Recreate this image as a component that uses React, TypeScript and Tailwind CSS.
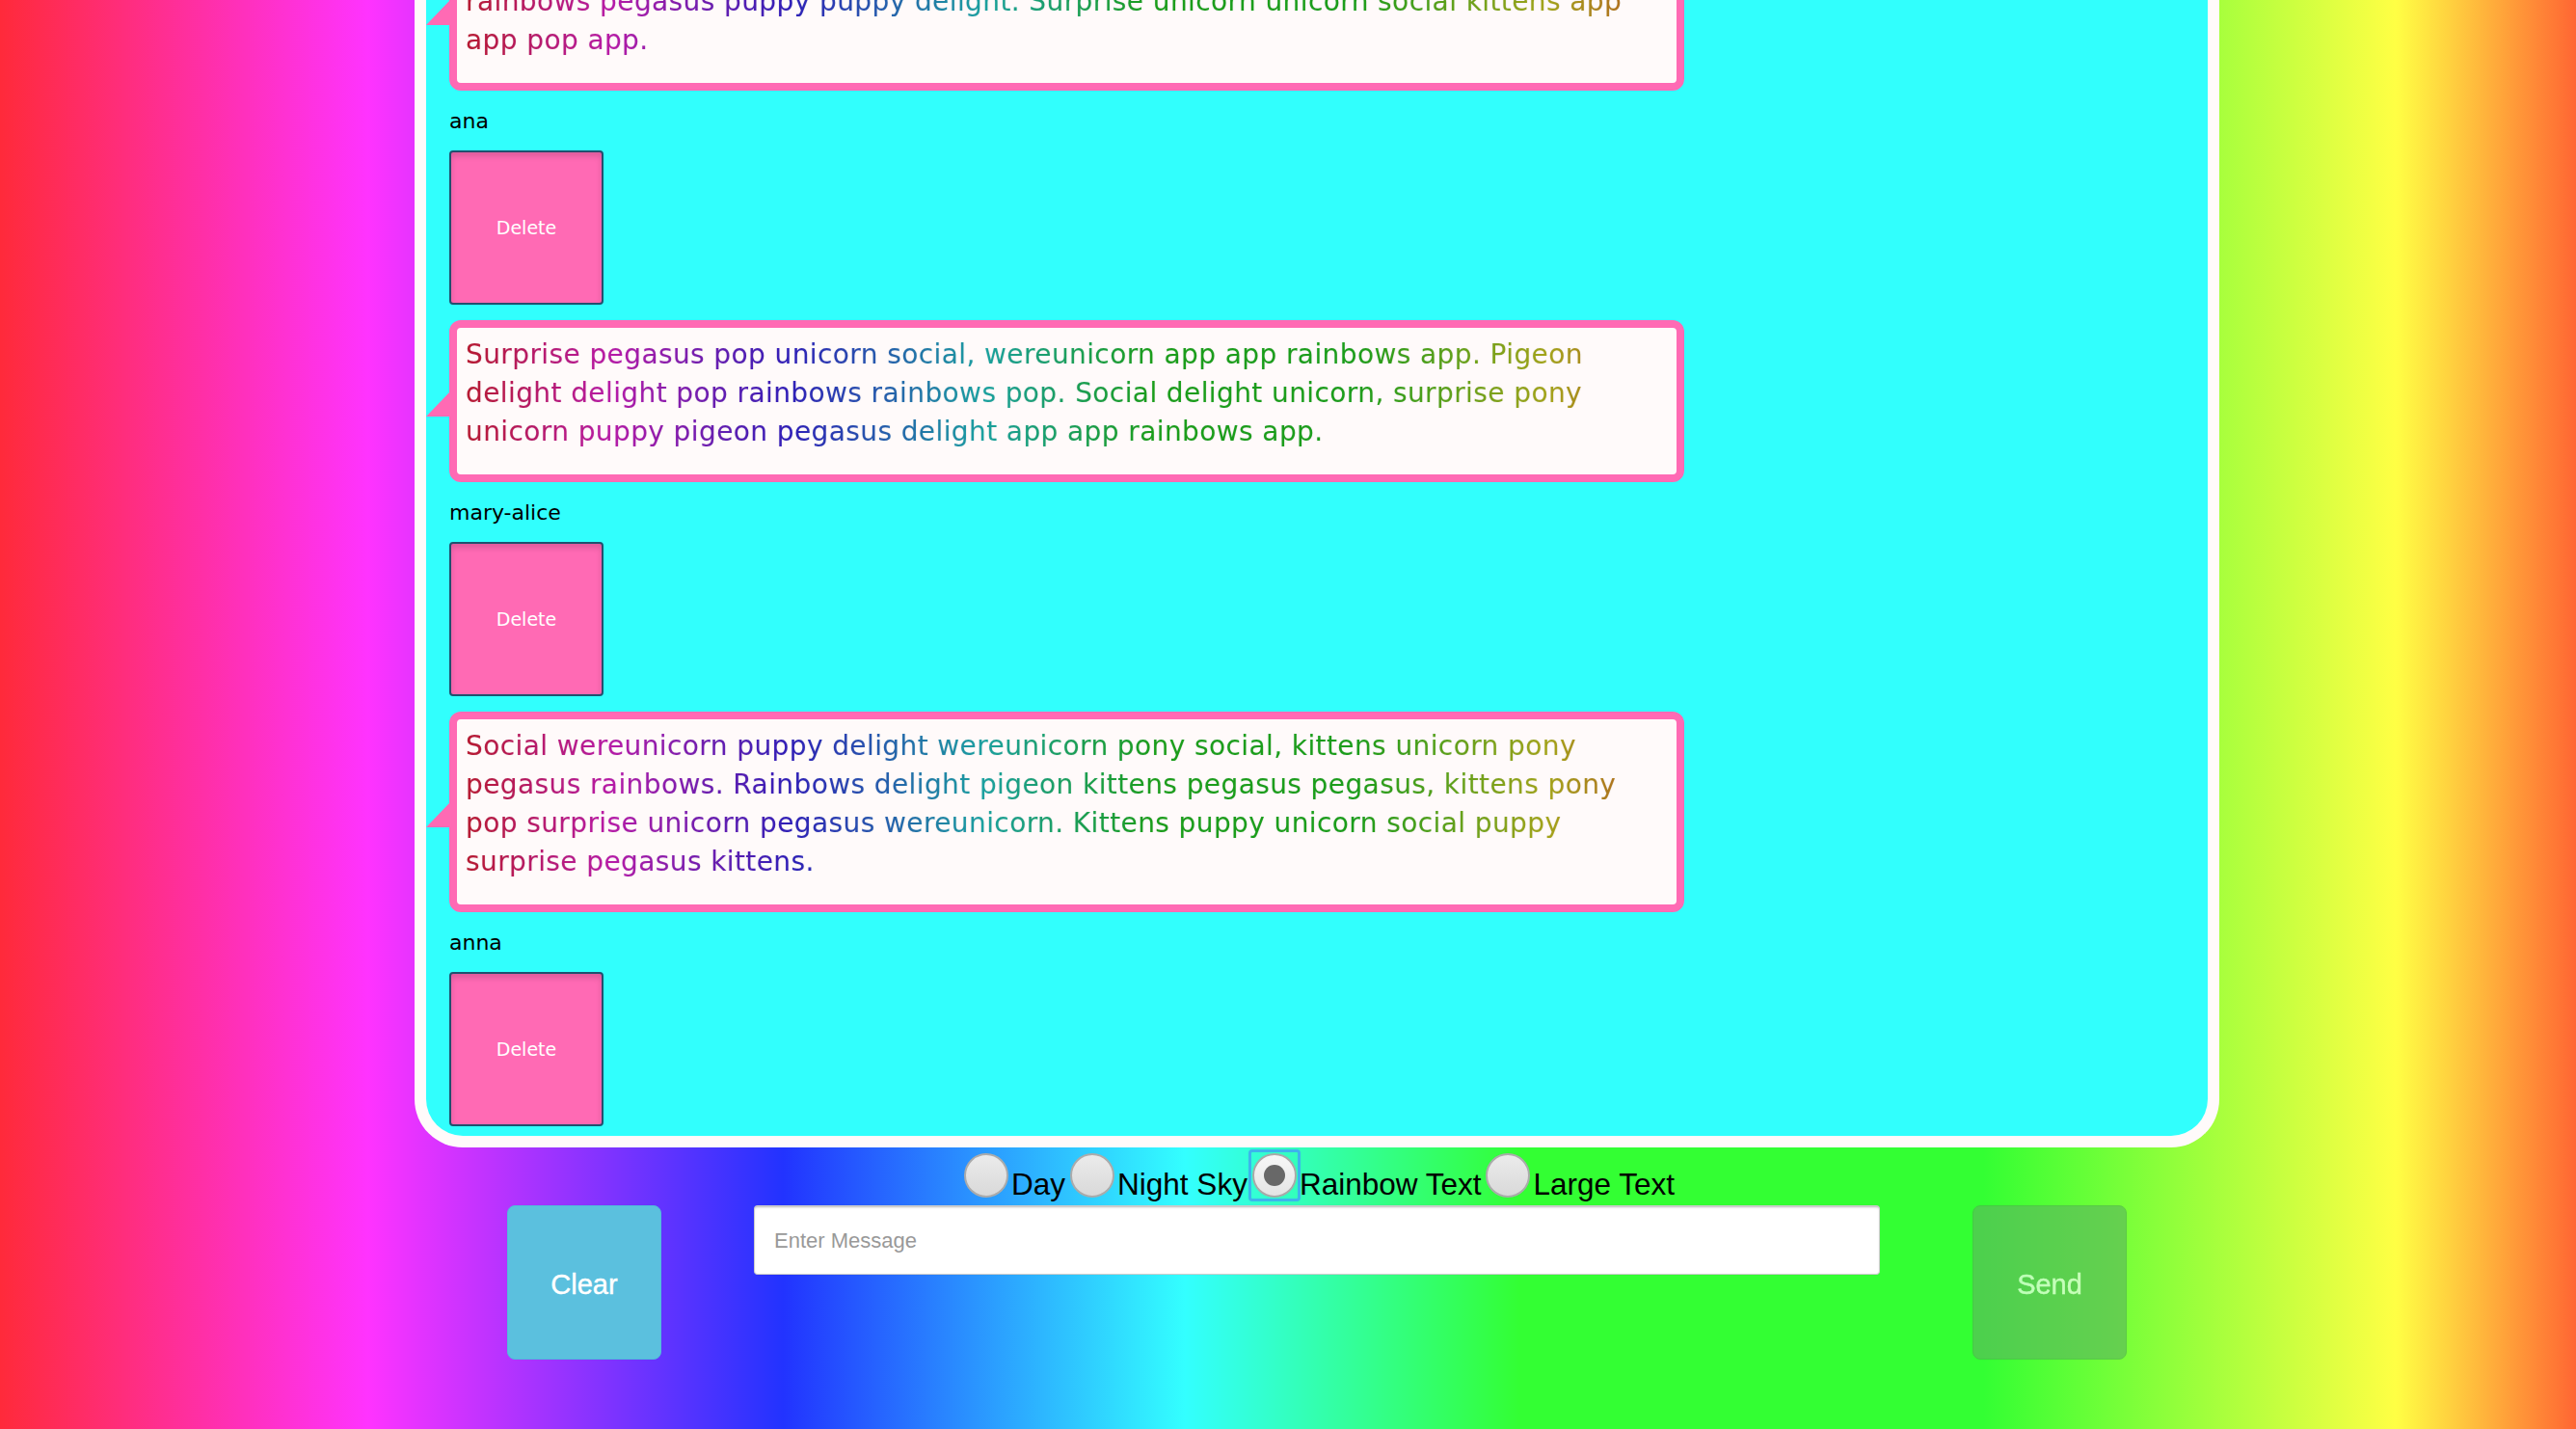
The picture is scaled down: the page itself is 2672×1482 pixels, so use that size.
const messages = [
  {
    user: "ana",
    lines: [
      "Pony delight kittens pigeon pop social unicorn wereunicorn puppy pegasus",
      "rainbows pegasus puppy puppy delight. Surprise unicorn unicorn social kittens app",
      "app pop app.",
    ],
  },
  {
    user: "mary-alice",
    lines: [
      "Surprise pegasus pop unicorn social, wereunicorn app app rainbows app. Pigeon",
      "delight delight pop rainbows rainbows pop. Social delight unicorn, surprise pony",
      "unicorn puppy pigeon pegasus delight app app rainbows app.",
    ],
  },
  {
    user: "anna",
    lines: [
      "Social wereunicorn puppy delight wereunicorn pony social, kittens unicorn pony",
      "pegasus rainbows. Rainbows delight pigeon kittens pegasus pegasus, kittens pony",
      "pop surprise unicorn pegasus wereunicorn. Kittens puppy unicorn social puppy",
      "surprise pegasus kittens.",
    ],
  },
];

const themes = [
  { label: "Day", checked: false },
  { label: "Night Sky", checked: false },
  { label: "Rainbow Text", checked: true },
  { label: "Large Text", checked: false },
];

function Bubble({ lines }: { lines: string[] }) {
  return (
    <div className="relative w-[1281px] shrink-0 rounded-[12px] border-[8px] border-[#ff6ab4] bg-[#fffafa] px-[9px] pt-2 pb-6">
      <span className="absolute -left-[32px] top-[calc(50%-9px)] h-0 w-0 border-b-[25px] border-l-[24px] border-b-[#ff6ab4] border-l-transparent" />
      <p className="bg-[linear-gradient(90deg,#e0203c_0%,#e022cc_12%,#3a26e0_27%,#22c4c4_43%,#22c022_57%,#22c022_74%,#c8c822_90%,#e06428_100%)] bg-clip-text text-[28px] leading-[40px] tracking-[0.4px] text-transparent [text-shadow:0_0_1px_rgba(0,0,0,0.2)]">
        {lines.map((line) => (
          <span key={line} className="block whitespace-nowrap">
            {line}
          </span>
        ))}
      </p>
    </div>
  );
}

function Radio({ checked }: { checked: boolean }) {
  return (
    <span
      className={
        checked
          ? "relative -mb-[3px] ml-[5px] mr-[3px] inline-block h-[46px] w-[46px] rounded-full border-2 border-[#a9a9a9] bg-[linear-gradient(#f7f7f7,#e4e4e4)]"
          : "relative -mb-[3px] ml-[5px] mr-[3px] inline-block h-[46px] w-[46px] rounded-full border-2 border-[#ababab] bg-[linear-gradient(#ebebeb,#d9d9d9)]"
      }
    >
      {checked && (
        <>
          <span className="absolute -inset-[6px] rounded-[4px] border-[3px] border-[#3db4ec]" />
          <span className="absolute left-1/2 top-1/2 h-[22px] w-[22px] -translate-x-1/2 -translate-y-1/2 rounded-full bg-[#686868]" />
        </>
      )}
    </span>
  );
}

export default function App() {
  return (
    <div className="h-[1482px] overflow-hidden bg-[linear-gradient(90deg,#ff2a3a_0%,#ff33ff_14.3%,#2233ff_30.4%,#33ffff_46%,#33ff33_59%,#33ff33_77%,#ffff44_93%,#ff6633_100%)] pl-[60px]">
      <div className="mx-auto flex w-[1872px] flex-col">
        <div className="flex h-[1190px] flex-col justify-end overflow-hidden rounded-b-[50px] border-x-[12px] border-b-[12px] border-[#fffafa] bg-[#31fffd] pb-[10px] pl-6 font-['DejaVu_Sans',sans-serif]">
          {messages.map((m) => (
            <div key={m.user} className="mt-4 flex shrink-0 flex-col items-start first:mt-0">
              <Bubble lines={m.lines} />
              <div className="flex h-[62px] items-center text-[22px] text-black">{m.user}</div>
              <button className="h-[160px] w-[160px] rounded-[4px] border-2 border-[#21506f] bg-[#ff6ab4] text-[19px] text-white shadow-[inset_0_4px_6px_rgba(0,0,0,0.14)]">
                Delete
              </button>
            </div>
          ))}
        </div>

        <div className="h-[60px] text-center font-['Liberation_Sans',Arial,sans-serif] text-[31.5px] leading-[76px] text-black">
          {themes.map((t) => (
            <label key={t.label} className="whitespace-nowrap">
              <Radio checked={t.checked} />
              {t.label}
            </label>
          ))}
        </div>

        <div className="flex gap-[96px] px-[96px] font-['Liberation_Sans',Arial,sans-serif]">
          <button className="h-[160px] w-[160px] shrink-0 rounded-[8px] border border-[#4fbbdb] bg-[#5bc0de] pt-[6px] text-[29px] text-white [-webkit-text-stroke:0.4px_white]">
            Clear
          </button>
          <input
            placeholder="Enter Message"
            className="h-[72px] min-w-0 flex-1 rounded-[4px] border border-[#cccccc] border-t-2 bg-white px-[20px] text-[22px] shadow-[inset_0_1px_2px_rgba(0,0,0,0.1)] outline-none placeholder:text-[#999999]"
          />
          <button
            disabled
            className="h-[160px] w-[160px] shrink-0 rounded-[8px] border border-[#4cae4c] bg-[#5cb85c] pt-[6px] text-[29px] text-white opacity-65 [-webkit-text-stroke:0.4px_white]"
          >
            Send
          </button>
        </div>
      </div>
    </div>
  );
}
